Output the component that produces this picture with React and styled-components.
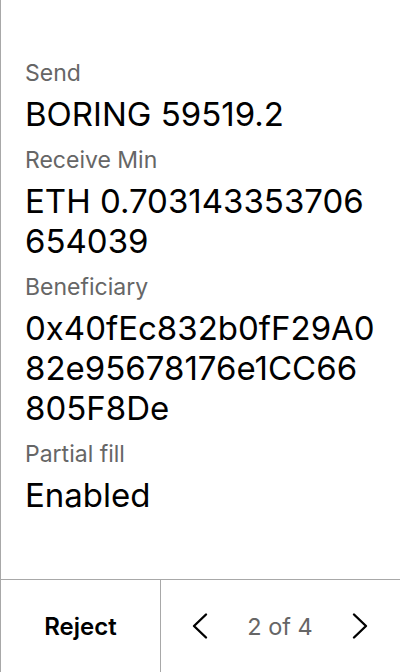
import styled, { createGlobalStyle } from 'styled-components';

const GlobalStyle = createGlobalStyle`
  html, body {
    margin: 0;
    padding: 0;
    background: #fff;
  }
  body {
    font-family: Inter, "Noto Sans", sans-serif;
  }
`;

const Screen = styled.div`
  width: 400px;
  height: 672px;
  box-sizing: border-box;
  border-left: 1px solid #a8a8a8;
  display: flex;
  flex-direction: column;
`;

const Details = styled.div`
  flex: 1;
  padding: 59px 24px 0 24px;
  display: flex;
  flex-direction: column;
`;

const Label = styled.div`
  font-size: 23px;
  line-height: 28px;
  color: #666;
  margin-top: ${(p) => (p.first ? '0' : '12px')};
`;

const Value = styled.div`
  font-size: 33px;
  line-height: 40px;
  color: #000;
  margin-top: 7px;
  word-break: break-all;
`;

const Footer = styled.div`
  height: 92px;
  border-top: 1px solid #a8a8a8;
  display: flex;
`;

const RejectButton = styled.button`
  width: 160px;
  border: none;
  border-right: 1px solid #a8a8a8;
  background: none;
  font-family: inherit;
  font-size: 24px;
  font-weight: 600;
  color: #000;
  padding: 0;
`;

const Pager = styled.div`
  flex: 1;
  display: flex;
  align-items: center;
  justify-content: space-between;
  padding: 0 26px 0 25px;
`;

const Arrow = styled.button`
  border: none;
  background: none;
  padding: 0;
  width: 28px;
  height: 28px;
  display: flex;
  align-items: center;
  justify-content: center;
`;

const PageCount = styled.span`
  font-size: 23.5px;
  color: #666;
`;

const Chevron = ({ dir }) => (
  <svg width="28" height="28" viewBox="0 0 28 28" fill="none" stroke="#000" strokeWidth="2.4" strokeLinecap="round" strokeLinejoin="round">
    {dir === 'left' ? <path d="M20 2.5 8 14l12 11.5" /> : <path d="M8 2.5 20 14 8 25.5" />}
  </svg>
);

const rows = [
  { label: 'Send', value: 'BORING 59519.2' },
  { label: 'Receive Min', value: 'ETH 0.703143353706654039' },
  { label: 'Beneficiary', value: '0x40fEc832b0fF29A082e95678176e1CC66805F8De' },
  { label: 'Partial fill', value: 'Enabled' },
];

const App = () => {
  return (
    <>
      <GlobalStyle />
      <Screen>
        <Details>
          {rows.map((row, i) => (
            <div key={row.label}>
              <Label first={i === 0}>{row.label}</Label>
              <Value>{row.value}</Value>
            </div>
          ))}
        </Details>
        <Footer>
          <RejectButton>Reject</RejectButton>
          <Pager>
            <Arrow><Chevron dir="left" /></Arrow>
            <PageCount>2 of 4</PageCount>
            <Arrow><Chevron dir="right" /></Arrow>
          </Pager>
        </Footer>
      </Screen>
    </>
  );
};

export default App;
